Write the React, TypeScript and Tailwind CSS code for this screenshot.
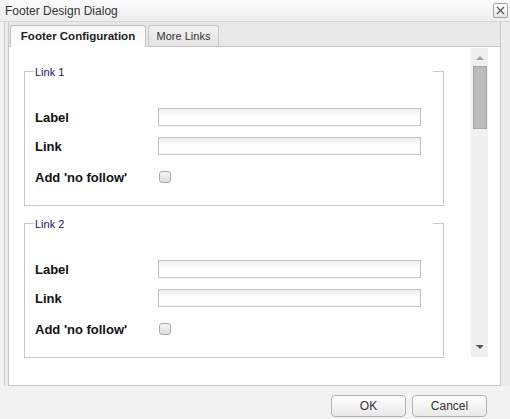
import React from "react";

type LinkSetProps = {
  title: string;
  first?: boolean;
};

function Field({ label }: { label: string }) {
  return (
    <div className="flex items-center h-[18px]">
      <div className="w-[123px] text-[13px] font-bold text-[#111] leading-none">{label}</div>
      <div className="w-[263px] h-[18px] border border-[#c2c2c2] bg-gradient-to-b from-[#eceeee] via-white to-white" />
    </div>
  );
}

function LinkSet({ title, first }: LinkSetProps) {
  return (
    <div className={first ? "" : "mt-[17px]"}>
      <div className="flex items-center h-px">
        <div className="w-[10px] h-px bg-[#c8c8c8]" />
        <span className="text-[11px] leading-none text-[#1a0d63] translate-y-[1px] ml-px">{title}</span>
        <div className="flex-1" />
        <div className="w-[11px] h-px bg-[#c8c8c8]" />
      </div>
      <div className="border-x border-b border-[#c8c8c8] pl-[10px] pt-[36px] pb-[19px]">
        <Field label="Label" />
        <div className="mt-[11px]">
          <Field label="Link" />
        </div>
        <div className="mt-[13px] flex items-center h-[18px]">
          <div className="w-[124px] text-[13px] font-bold text-[#111] leading-none">Add 'no follow'</div>
          <div className="w-[12px] h-[12px] rounded-[3px] border border-[#a9a9a9] bg-gradient-to-b from-[#f6f6f6] to-[#dcdcdc]" />
        </div>
      </div>
    </div>
  );
}

function Scrollbar() {
  return (
    <div className="ml-[27px] mt-px w-[17px] h-[309px] bg-[#f0f0f0] flex flex-col items-center">
      <div className="mt-[8px] w-0 h-0 border-x-[4px] border-x-transparent border-b-[4px] border-b-[#a4a4a4]" />
      <div className="mt-[6px] w-[14px] h-[63px] bg-[#bbbbbb] border border-[#a7a7a7]" />
      <div className="flex-1" />
      <div className="mb-[8px] flex flex-col items-center">
        <div className="w-[7px] h-px bg-[#555]" />
        <div className="w-0 h-0 border-x-[3px] border-x-transparent border-t-[3px] border-t-[#555]" />
      </div>
    </div>
  );
}

export default function App() {
  return (
    <div className="w-[510px] h-[419px] bg-[#f2f2f2] flex flex-col overflow-hidden font-['Liberation_Sans',Arial,sans-serif]">
      <div className="h-[22px] border-b border-[#d6d6d6] bg-gradient-to-b from-[#fbfbfb] to-[#eeeeee] flex items-center justify-between pl-[5px] pr-[2px]">
        <span className="text-[12px] text-[#333] leading-none">Footer Design Dialog</span>
        <div className="w-[15px] h-[15px] rounded-[2px] border border-[#a0a0a0] bg-gradient-to-b from-white to-[#e6e6e6] flex items-center justify-center">
          <svg width="9" height="9" viewBox="0 0 9 9">
            <path d="M1 1 L8 8 M8 1 L1 8" stroke="#555" strokeWidth="1.2" fill="none" />
          </svg>
        </div>
      </div>

      <div className="ml-[4px] h-[364px] border-l border-[#cdcdcd] bg-[#ebebeb] pl-[3px] pr-[9px]">
        <div className="h-full flex flex-col border-x border-[#c8c8c8]">
          <div className="h-[25px] bg-[#e8e8e8] border-b border-[#c6c6c6] flex items-end pl-px gap-[2px]">
            <div className="w-[136px] h-[22px] -mb-px border border-b-0 border-[#c0c0c0] rounded-t-[3px] bg-gradient-to-b from-[#f7f7f7] to-white flex items-center justify-center text-[11.5px] font-bold text-[#222]">
              Footer Configuration
            </div>
            <div className="w-[71px] h-[21px] border border-b-0 border-[#c6c6c6] rounded-t-[3px] bg-gradient-to-b from-[#f2f2f2] to-[#e2e2e2] flex items-center justify-center text-[11px] text-[#333]">
              More Links
            </div>
          </div>
          <div className="flex-1 bg-white border-b border-[#c8c8c8] flex items-start">
            <div className="pl-[15px] pt-[24px] w-[435px]">
              <LinkSet title="Link 1" first />
              <LinkSet title="Link 2" />
            </div>
            <Scrollbar />
          </div>
        </div>
      </div>

      <div className="flex-1 flex justify-end items-start pt-[9px] pr-[23px] gap-[6px]">
        <button className="w-[75px] h-[22px] rounded-[4px] border border-[#b3b3b3] bg-gradient-to-b from-white to-[#e9e9e9] text-[12px] text-[#333]">
          OK
        </button>
        <button className="w-[75px] h-[22px] rounded-[4px] border border-[#b3b3b3] bg-gradient-to-b from-white to-[#e9e9e9] text-[12px] text-[#333]">
          Cancel
        </button>
      </div>
    </div>
  );
}
